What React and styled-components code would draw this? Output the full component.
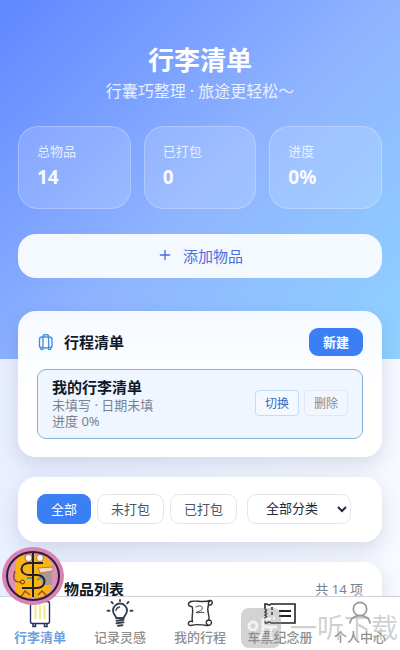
import React, { useState } from 'react';
import styled, { createGlobalStyle } from 'styled-components';
import { Plus } from 'lucide-react';

const GlobalStyle = createGlobalStyle`
  * {
    box-sizing: border-box;
  }

  body {
    margin: 0;
    font-family: "Noto Sans", "Noto Sans CJK SC", sans-serif;
    color: #111827;
  }

  button, select {
    font-family: inherit;
    cursor: pointer;
  }

  h1, h2, h3, p, dl, dt, dd {
    margin: 0;
  }
`;

const Shell = styled.div`
  position: relative;
  height: 100vh;
  display: flex;
  flex-direction: column;
  background: linear-gradient(100deg, #e6edff, #f8faff);
`;

const Main = styled.main`
  flex: 1;
  min-height: 0;
  overflow-y: auto;
  scrollbar-width: none;
`;

const Hero = styled.header`
  padding: 44px 18px 81px;
  background: linear-gradient(135deg, #5f87ff 0%, #8fb4ff 52%, #8fd3ff 100%);
  color: white;
  text-align: center;
`;

const Title = styled.h1`
  font-size: 26px;
  line-height: 32px;
  font-weight: 700;
`;

const Subtitle = styled.p`
  margin-top: 3px;
  font-size: 16px;
  line-height: 24px;
  color: rgba(255, 255, 255, 0.85);
`;

const Stats = styled.dl`
  display: grid;
  grid-template-columns: repeat(3, 1fr);
  gap: 13px;
  margin-top: 23px;
`;

const Stat = styled.div`
  padding: 14px 18px 18px;
  border: 1px solid rgba(255, 255, 255, 0.25);
  border-radius: 20px;
  background: rgba(255, 255, 255, 0.15);
  text-align: left;

  dt {
    font-size: 13px;
    line-height: 20px;
    color: rgba(255, 255, 255, 0.8);
  }

  dd {
    margin-top: 3px;
    font-size: 19px;
    line-height: 26px;
    font-weight: 700;
    color: rgba(255, 255, 255, 0.95);
  }
`;

const AddButton = styled.button`
  display: flex;
  align-items: center;
  justify-content: center;
  gap: 10px;
  width: 100%;
  height: 44px;
  margin-top: 25px;
  padding: 0 0 2px;
  border: 0;
  border-radius: 18px;
  background: #f4f8ff;
  color: #4a6fdc;
  font-size: 15px;
`;

const Content = styled.div`
  display: grid;
  gap: 20px;
  margin-top: -48px;
  padding: 0 18px 20px;
`;

const Card = styled.section`
  padding: 17px 19px 18px;
  border-radius: 18px;
  background: linear-gradient(#f5f9ff, #ffffff 50%);
  box-shadow: 0 8px 20px rgba(30, 50, 100, 0.14);
`;

const PlainCard = styled(Card)`
  background: white;
`;

const CardHeader = styled.div`
  display: flex;
  align-items: center;
  justify-content: space-between;
`;

const CardTitle = styled.h2`
  display: flex;
  align-items: center;
  gap: 9px;
  font-size: 15px;
  line-height: 20px;
  font-weight: 700;
`;

const NewButton = styled.button`
  height: 28px;
  padding: 0 14px 2px;
  border: 0;
  border-radius: 9px;
  background: #3b7ff5;
  color: white;
  font-size: 13px;
  font-weight: 700;
`;

const Trip = styled.article`
  display: flex;
  align-items: center;
  justify-content: space-between;
  margin-top: 13px;
  padding: 7px 14px 9px;
  border: 1px solid #84b4d6;
  border-radius: 9px;
  background: #eff6ff;
`;

const TripName = styled.h3`
  font-size: 15px;
  line-height: 20px;
  font-weight: 700;
`;

const TripMeta = styled.p`
  font-size: 13px;
  line-height: 16px;
  color: #7b828f;
`;

const TripActions = styled.div`
  display: flex;
  gap: 5px;
`;

const SmallButton = styled.button`
  height: 26px;
  padding: 0 9px 1px;
  border: 1px solid ${({ $primary }) => ($primary ? '#bfdbfe' : '#e2e8f3')};
  border-radius: 4px;
  background: ${({ $primary }) => ($primary ? '#f3f9ff' : '#f1f6ff')};
  color: ${({ $primary }) => ($primary ? '#3467c4' : '#858b96')};
  font-size: 12px;
`;

const Filters = styled.div`
  display: flex;
  align-items: center;
  gap: 6px;
`;

const FilterButton = styled.button`
  height: 30px;
  padding: 0 13px 2px;
  border: 1px solid ${({ $active }) => ($active ? '#3b7ff5' : '#e3e6ec')};
  border-radius: 9px;
  background: ${({ $active }) => ($active ? '#3b7ff5' : 'white')};
  color: ${({ $active }) => ($active ? 'white' : '#4b5563')};
  font-size: 13px;
`;

const CategorySelect = styled.select`
  width: 104px;
  height: 30px;
  margin-left: 4px;
  padding: 0 3px 2px 14px;
  border: 1px solid #e3e6ec;
  border-radius: 9px;
  background: white;
  color: #1f2937;
  font-size: 13px;
`;

const ListCard = styled(PlainCard)`
  min-height: 120px;
`;

const ListTitle = styled(CardTitle)`
  padding-left: 27px;
`;

const Count = styled.span`
  font-size: 13px;
  line-height: 20px;
  color: #7b828f;
`;

const TabBar = styled.nav`
  display: grid;
  grid-template-columns: repeat(5, 1fr);
  height: 54px;
  border-top: 1px solid #cfd2d9;
  background: white;
`;

const Tab = styled.a`
  display: flex;
  flex-direction: column;
  align-items: center;
  padding-top: 2px;
  color: ${({ $active }) => ($active ? '#6d9fe0' : '#8f8f8f')};
  font-size: 13px;
  line-height: 16px;
  font-weight: ${({ $active }) => ($active ? 700 : 500)};
  text-decoration: none;
  white-space: nowrap;
`;

const CoinButton = styled.button`
  position: absolute;
  left: 2px;
  bottom: 45px;
  width: 62px;
  height: 58px;
  padding: 0;
  border: 0;
  background: none;

  svg {
    display: block;
  }
`;

const Watermark = styled.div`
  position: absolute;
  right: 2px;
  bottom: 2px;
  display: flex;
  align-items: center;
  gap: 9px;
  color: rgba(130, 130, 130, 0.38);
  font-size: 27px;
  line-height: 40px;
  white-space: nowrap;
  pointer-events: none;
`;

const CaseIcon = () => (
  <svg width="18" height="18" viewBox="0 0 18 18" fill="none" stroke="#4a8fe0" strokeWidth="1.4">
    <rect x="2.5" y="4" width="12.500" height="11" rx="2.500" />
    <path d="M6 15V3.200Q6 1.800 7.400 1.800H10.200Q11.600 1.800 11.600 3.200V15" />
    <circle cx="5" cy="15.400" r="1.200" fill="white" />
    <circle cx="12.600" cy="15.400" r="1.200" fill="white" />
  </svg>
);

const SuitcaseTab = () => (
  <svg width="32" height="30" viewBox="0 0 32 30" fill="none">
    <rect x="6.500" y="2.500" width="19" height="22" rx="2" fill="white" stroke="#2c2e66" strokeWidth="1.400" />
    <path d="M11.500 6V20M16 6V20M20.500 6V20" stroke="#f2ec86" strokeWidth="2" />
    <path d="M9 25V27.500H11.500V25M20.500 25V27.500H23V25" stroke="#2c2e66" strokeWidth="1.500" />
  </svg>
);

const BulbTab = () => (
  <svg width="32" height="30" viewBox="0 0 32 30" fill="none" stroke="#374151" strokeWidth="1.900" strokeLinecap="round">
    <path d="M12.300 19C12 16.500 9 15.500 9 11.500A7 7 0 0 1 23 11.500C23 15.500 20 16.500 19.700 19Z" />
    <path d="M12 11.500A4 4 0 0 1 15.500 8" strokeWidth="1.300" />
    <path d="M12.500 21.700L19.500 20.700M12.500 24.300L19.500 23.300M14 26.800L18.500 26.200" />
    <path d="M16 1V2M7.500 3L8.800 4.300M24.500 3L23.200 4.300M3.500 11.800H5.500M26.500 11.800H28.500" />
  </svg>
);

const ScrollTab = () => (
  <svg width="32" height="30" viewBox="0 0 32 30" fill="none" stroke="#333333" strokeWidth="1.400" strokeLinecap="round" strokeLinejoin="round">
    <path d="M7 2.500C11 1 20 4 26 1.500C29 1 29 6 26 6C23.500 6 24 3 26 2" />
    <path d="M7 2.500C3 4 4 8 8 7.500C10 12 7 18 8.500 22.500" />
    <path d="M24.500 6C22 12 26 16 25 21" />
    <path d="M8.500 22.500C3.500 21.500 3 26.500 7 26.500C12 25 17 25.500 23 26.500C28 27 29 21.500 25 21C21.500 21 21.500 25 24 26" />
    <path d="M12 8C15 6 18 7 18.500 9C18 12 15 12 12 13.500C15 14.500 17 12.500 20 13.500" strokeWidth="0.900" />
  </svg>
);

const TicketTab = () => (
  <svg width="32" height="30" viewBox="0 0 32 30" fill="none" stroke="#222222" strokeWidth="1.600">
    <path d="M1 5H3Q5 7 7 5H31V24H7Q5 22 3 24H1V19L2.500 17.500L1 16L2.500 14.500L1 13L2.500 11.500L1 10Z" />
    <path d="M8 8V22" strokeDasharray="3 2" />
    <path d="M15 12H27M15 17H27" strokeWidth="1.900" />
  </svg>
);

const PersonTab = () => (
  <svg width="32" height="30" viewBox="0 0 32 30" fill="none" stroke="#999999" strokeWidth="1.700" strokeLinecap="round">
    <circle cx="16" cy="10" r="6.700" />
    <path d="M6 24C6.500 19.500 10.500 16.700 16 16.700S25.500 19.500 26 24" />
  </svg>
);

const Coin = () => (
  <svg width="62" height="58" viewBox="0 0 62 58" fill="none">
    <ellipse cx="31" cy="29" rx="31" ry="29" fill="#d982b4" />
    <ellipse cx="31" cy="29" rx="26" ry="24" fill="#dd90b8" />
    <path d="M14 15Q16 8 24 8H38Q47 9 50 18V40Q47 48 38 50H22Q14 49 13 42Z" fill="#f8b515" />
    <path d="M37 24H50V38H40Z" fill="#a79b98" />
    <path d="M36 21L51 20V24L38 26Z" fill="#f3d9c5" stroke="#c37945" />
    <path d="M13 24Q9 35 18 35M19 50L23 44L28 48M36 48L40 44L45 49" stroke="#9d4b20" strokeWidth="1.500" />
    <path d="M25 31H30M35 33L40 30" stroke="#4f9b91" strokeWidth="2" />
    <circle cx="20.500" cy="35" r="2" stroke="#55341b" />
    <circle cx="26.500" cy="11" r="3.500" fill="white" stroke="#b76b3b" />
    <circle cx="38" cy="11" r="3.500" fill="white" stroke="#b76b3b" />
    <path d="M41 16H27C17 16 17 28 27 28H35C45 28 45 41 35 41H20M31 6V50" stroke="#24202a" strokeWidth="2" />
    <ellipse cx="31" cy="29" rx="26" ry="24" stroke="#2b1f33" strokeWidth="2" />
  </svg>
);

const WatermarkLogo = () => (
  <svg width="40" height="40" viewBox="0 0 40 40" fill="none">
    <rect width="40" height="40" rx="8" fill="#8c8c8c" fillOpacity="0.38" />
    <circle cx="12" cy="18" r="4" stroke="white" strokeOpacity="0.7" strokeWidth="3" />
    <path d="M34 10L22 12V20Q22 27 18 31M22 19H36M30 19V32" stroke="white" strokeOpacity="0.7" strokeWidth="3" />
  </svg>
);

const stats = [
  { label: '总物品', value: '14' },
  { label: '已打包', value: '0' },
  { label: '进度', value: '0%' },
];

const filters = ['全部', '未打包', '已打包'];

const tabs = [
  { label: '行李清单', Icon: SuitcaseTab },
  { label: '记录灵感', Icon: BulbTab },
  { label: '我的行程', Icon: ScrollTab },
  { label: '车票纪念册', Icon: TicketTab },
  { label: '个人中心', Icon: PersonTab },
];

const App = () => {
  const [filter, setFilter] = useState('全部');
  const [tab, setTab] = useState('行李清单');

  return (
    <Shell>
      <GlobalStyle />
      <Main>
        <Hero>
          <Title>行李清单</Title>
          <Subtitle>行囊巧整理 · 旅途更轻松～</Subtitle>
          <Stats>
            {stats.map(({ label, value }) => (
              <Stat key={label}>
                <dt>{label}</dt>
                <dd>{value}</dd>
              </Stat>
            ))}
          </Stats>
          <AddButton type="button">
            <Plus size={16} strokeWidth={2} />
            添加物品
          </AddButton>
        </Hero>

        <Content>
          <Card>
            <CardHeader>
              <CardTitle>
                <CaseIcon />
                行程清单
              </CardTitle>
              <NewButton type="button">新建</NewButton>
            </CardHeader>
            <Trip>
              <div>
                <TripName>我的行李清单</TripName>
                <TripMeta>未填写 · 日期未填</TripMeta>
                <TripMeta>进度 0%</TripMeta>
              </div>
              <TripActions>
                <SmallButton type="button" $primary>切换</SmallButton>
                <SmallButton type="button">删除</SmallButton>
              </TripActions>
            </Trip>
          </Card>

          <PlainCard>
            <Filters>
              {filters.map((name) => (
                <FilterButton
                  key={name}
                  type="button"
                  $active={name === filter}
                  onClick={() => setFilter(name)}
                >
                  {name}
                </FilterButton>
              ))}
              <CategorySelect aria-label="全部分类">
                <option>全部分类</option>
              </CategorySelect>
            </Filters>
          </PlainCard>

          <ListCard>
            <CardHeader>
              <ListTitle>物品列表</ListTitle>
              <Count>共 14 项</Count>
            </CardHeader>
          </ListCard>
        </Content>
      </Main>

      <TabBar>
        {tabs.map(({ label, Icon }) => (
          <Tab key={label} href="#" $active={label === tab} onClick={() => setTab(label)}>
            <Icon />
            {label}
          </Tab>
        ))}
      </TabBar>

      <CoinButton type="button" aria-label="$">
        <Coin />
      </CoinButton>

      <Watermark>
        <WatermarkLogo />
        一听下载
      </Watermark>
    </Shell>
  );
};

export default App;
